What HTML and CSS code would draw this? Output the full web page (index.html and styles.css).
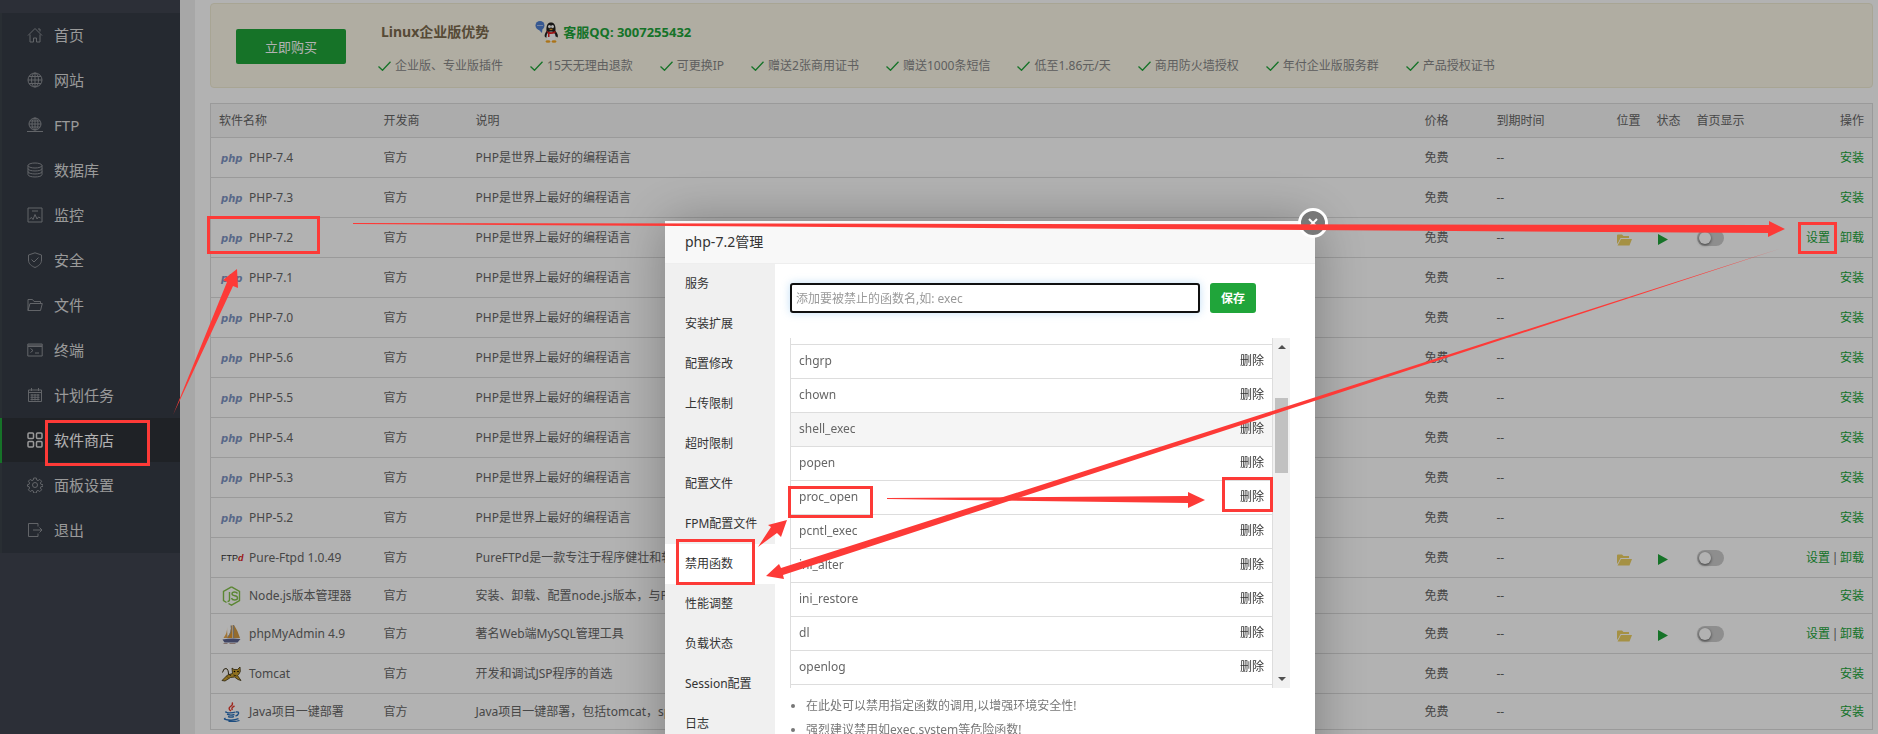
FILE: index.html
```html
<!DOCTYPE html>
<html lang="zh-CN">
<head>
    <meta charset="UTF-8">
    <meta name="viewport" content="width=device-width, initial-scale=1.0">
    <title>软件商店</title>
    <link rel="stylesheet" href="styles.css">
</head>
<body>
    <svg class="sprite" aria-hidden="true">
        <symbol id="i-home" viewBox="0 0 16 16"><path d="M1 8.5 8 1.5l7 7M3 7.5V15h3.5v-4h3v4H13V7.500M11 2h2v2.500"/></symbol>
        <symbol id="i-globe" viewBox="0 0 16 16"><circle cx="8" cy="8" r="7"/><ellipse cx="8" cy="8" rx="3.500" ry="7"/><path d="M8 1v14M1 8h14M2 4.500h12M2 11.500h12"/></symbol>
        <symbol id="i-ftp" viewBox="0 0 16 16"><circle cx="8" cy="7" r="6"/><ellipse cx="8" cy="7" rx="3" ry="6"/><path d="M8 1v12M2 7h12M3 4h10M3 10h10M0 14.500h16" /></symbol>
        <symbol id="i-db" viewBox="0 0 16 16"><ellipse cx="8" cy="3.500" rx="7" ry="2.500"/><path d="M1 3.500v9c0 3.300 14 3.300 14 0v-9M1 6.500c0 3.300 14 3.300 14 0M1 9.500c0 3.300 14 3.300 14 0"/></symbol>
        <symbol id="i-monitor" viewBox="0 0 16 16"><path d="M1 1h14v14H1zM5 4h6M2.500 12l2-1.500 1.500 2 2-5 2 4.500 1.500-2 2 1"/></symbol>
        <symbol id="i-shield" viewBox="0 0 16 16"><path d="M8 .8 14.500 3v5c0 4-3 6-6.500 7.500C4.500 14 1.500 12 1.500 8V3zM4.500 7.500 7 10l4.500-4.500"/></symbol>
        <symbol id="i-folder" viewBox="0 0 16 16"><path d="M1 13.500v-11h4.500l1.500 2h6.500v2M1 13.500l2-7h12.300l-1.800 7z"/></symbol>
        <symbol id="i-term" viewBox="0 0 16 16"><path d="M.8 2h14.400v12H.8zM1 4.500h14M1 3.200h14M3.500 6.500l2.500 2-2.500 2M8 11h4"/></symbol>
        <symbol id="i-cal" viewBox="0 0 16 16"><path d="M1.500 3h13v11.500h-13zM1.500 5.500h13M4.500 1v3M11.500 1v3M3.500 8h9M3.500 10.300h9M3.500 12.500h9M5 7v6.500M8 7v6.500M11 7v6.500"/></symbol>
        <symbol id="i-apps" viewBox="0 0 16 16"><rect x="1" y="1" width="5.500" height="5.500" rx="1"/><rect x="9.500" y="1" width="5.500" height="5.500" rx="1"/><rect x="1" y="9.500" width="5.500" height="5.500" rx="1"/><rect x="9.500" y="9.500" width="5.500" height="5.500" rx="1"/></symbol>
        <symbol id="i-gear" viewBox="0 0 16 16"><path d="M6.700 1h2.600l.4 2 1.300.600 1.800-1.200 1.800 1.800-1.200 1.800.5 1.300 2.100.4v1.600l-2.100.4-.5 1.300 1.200 1.800-1.800 1.800-1.800-1.200-1.300.600-.4 2H6.700l-.4-2L5 13.400l-1.800 1.200-1.800-1.800L2.600 11l-.5-1.300L.5 9.300V7.700l1.600-.4L2.600 6 1.400 4.200l1.800-1.800L5 3.600 6.300 3z"/><circle cx="8" cy="8" r="2.500"/></symbol>
        <symbol id="i-exit" viewBox="0 0 16 16"><path d="M11 4.500V1.500H1.500v13H11v-3M6 8h9M12.500 5.500 15 8l-2.500 2.500"/></symbol>
        <symbol id="i-check" viewBox="0 0 13 10"><path d="M.5 5.500 4.500 9.300 12.500.7" fill="none" stroke="#20a53a" stroke-width="1.300"/></symbol>
        <symbol id="i-open" viewBox="0 0 15 12"><path d="M0 10V1.500Q0 .5 1 .5h4l1.500 1.500H12v2H3.500L1.500 8z" fill="#edd062"/><path d="M4 5h11l-2.500 6.500H.5z" fill="#edd062"/></symbol>
        <symbol id="i-play" viewBox="0 0 10 11"><path d="M0 0v11l10-5.500z" fill="#20a53a"/></symbol>
    </svg>

    <div class="page">
        <nav class="sidebar">
            <ul class="menu">
                <li><a href="#"><svg><use href="#i-home"/></svg>首页</a></li>
                <li><a href="#"><svg><use href="#i-globe"/></svg>网站</a></li>
                <li><a href="#"><svg><use href="#i-ftp"/></svg>FTP</a></li>
                <li><a href="#"><svg><use href="#i-db"/></svg>数据库</a></li>
                <li><a href="#"><svg><use href="#i-monitor"/></svg>监控</a></li>
                <li><a href="#"><svg><use href="#i-shield"/></svg>安全</a></li>
                <li><a href="#"><svg><use href="#i-folder"/></svg>文件</a></li>
                <li><a href="#"><svg><use href="#i-term"/></svg>终端</a></li>
                <li><a href="#"><svg><use href="#i-cal"/></svg>计划任务</a></li>
                <li class="current"><a href="#"><svg><use href="#i-apps"/></svg>软件商店</a></li>
                <li><a href="#"><svg><use href="#i-gear"/></svg>面板设置</a></li>
                <li><a href="#"><svg><use href="#i-exit"/></svg>退出</a></li>
            </ul>
        </nav>

        <main class="content">
            <section class="banner">
                <button type="button" class="btn-buy">立即购买</button>
                <div class="banner-info">
                    <div class="banner-title">
                        <h3>Linux企业版优势</h3>
                        <a class="qq" href="#">
                            <svg width="24" height="22" viewBox="0 0 24 22">
                                <circle cx="5" cy="4.500" r="4.500" fill="#4f7fd0"/><path d="M3 8l4 4 .5-5z" fill="#4f7fd0"/>
                                <path d="M2.500 4.500h1M4.500 4.500h1M6.500 4.500h1" stroke="#fff"/>
                                <path d="M10 16c-1-1 0-4 1.500-6C11 4 13 1.500 16 1.500s5 2.500 4.500 8.500c2 2 3 5 2 6.500l-1.500-1-10 1z" fill="#222"/>
                                <ellipse cx="16" cy="15.500" rx="4.500" ry="5" fill="#fff"/>
                                <circle cx="14.500" cy="5.500" r="1.500" fill="#fff"/><circle cx="17.500" cy="5.500" r="1.500" fill="#fff"/>
                                <path d="M13.500 7.700h5l-2.500 1.600z" fill="#f5a623"/>
                                <path d="M11.500 10c3 1.500 6 1.500 9 0v2c-2 1-4 1.200-6 1v3h-1.500v-3.500z" fill="#e02020"/>
                                <ellipse cx="13" cy="20.500" rx="2.500" ry="1.200" fill="#f5a623"/><ellipse cx="19" cy="20.500" rx="2.500" ry="1.200" fill="#f5a623"/>
                            </svg>
                            客服QQ: 3007255432
                        </a>
                    </div>
                    <ul class="features">
                        <li><svg><use href="#i-check"/></svg>企业版、专业版插件</li>
                        <li><svg><use href="#i-check"/></svg>15天无理由退款</li>
                        <li><svg><use href="#i-check"/></svg>可更换IP</li>
                        <li><svg><use href="#i-check"/></svg>赠送2张商用证书</li>
                        <li><svg><use href="#i-check"/></svg>赠送1000条短信</li>
                        <li><svg><use href="#i-check"/></svg>低至1.86元/天</li>
                        <li><svg><use href="#i-check"/></svg>商用防火墙授权</li>
                        <li><svg><use href="#i-check"/></svg>年付企业版服务群</li>
                        <li><svg><use href="#i-check"/></svg>产品授权证书</li>
                    </ul>
                </div>
            </section>

            <table class="soft">
                <colgroup>
                    <col class="c-name"><col class="c-dev"><col><col class="c-price"><col class="c-end">
                    <col class="c-icon"><col class="c-icon"><col class="c-home"><col class="c-act">
                </colgroup>
                <thead>
                    <tr><th>软件名称</th><th>开发商</th><th>说明</th><th>价格</th><th>到期时间</th><th>位置</th><th>状态</th><th>首页显示</th><th class="act">操作</th></tr>
                </thead>
                <tbody>
                    <tr><td><span class="name"><i class="php">php</i>PHP-7.4</span></td><td>官方</td><td>PHP是世界上最好的编程语言</td><td>免费</td><td>--</td><td></td><td></td><td></td><td class="act"><a href="#">安装</a></td></tr>
                    <tr><td><span class="name"><i class="php">php</i>PHP-7.3</span></td><td>官方</td><td>PHP是世界上最好的编程语言</td><td>免费</td><td>--</td><td></td><td></td><td></td><td class="act"><a href="#">安装</a></td></tr>
                    <tr><td><span class="name"><i class="php">php</i>PHP-7.2</span></td><td>官方</td><td>PHP是世界上最好的编程语言</td><td>免费</td><td>--</td><td><svg class="open"><use href="#i-open"/></svg></td><td><svg class="play"><use href="#i-play"/></svg></td><td><input type="checkbox" class="switch" aria-label="首页显示 PHP-7.2"></td><td class="act"><a href="#">设置</a><span class="sep">|</span><a href="#">卸载</a></td></tr>
                    <tr><td><span class="name"><i class="php">php</i>PHP-7.1</span></td><td>官方</td><td>PHP是世界上最好的编程语言</td><td>免费</td><td>--</td><td></td><td></td><td></td><td class="act"><a href="#">安装</a></td></tr>
                    <tr><td><span class="name"><i class="php">php</i>PHP-7.0</span></td><td>官方</td><td>PHP是世界上最好的编程语言</td><td>免费</td><td>--</td><td></td><td></td><td></td><td class="act"><a href="#">安装</a></td></tr>
                    <tr><td><span class="name"><i class="php">php</i>PHP-5.6</span></td><td>官方</td><td>PHP是世界上最好的编程语言</td><td>免费</td><td>--</td><td></td><td></td><td></td><td class="act"><a href="#">安装</a></td></tr>
                    <tr><td><span class="name"><i class="php">php</i>PHP-5.5</span></td><td>官方</td><td>PHP是世界上最好的编程语言</td><td>免费</td><td>--</td><td></td><td></td><td></td><td class="act"><a href="#">安装</a></td></tr>
                    <tr><td><span class="name"><i class="php">php</i>PHP-5.4</span></td><td>官方</td><td>PHP是世界上最好的编程语言</td><td>免费</td><td>--</td><td></td><td></td><td></td><td class="act"><a href="#">安装</a></td></tr>
                    <tr><td><span class="name"><i class="php">php</i>PHP-5.3</span></td><td>官方</td><td>PHP是世界上最好的编程语言</td><td>免费</td><td>--</td><td></td><td></td><td></td><td class="act"><a href="#">安装</a></td></tr>
                    <tr><td><span class="name"><i class="php">php</i>PHP-5.2</span></td><td>官方</td><td>PHP是世界上最好的编程语言</td><td>免费</td><td>--</td><td></td><td></td><td></td><td class="act"><a href="#">安装</a></td></tr>
                    <tr><td><span class="name"><i class="ftp">FTP<b>d</b></i>Pure-Ftpd 1.0.49</span></td><td>官方</td><td>PureFTPd是一款专注于程序健壮和软件安全的免费FTP服务器软件</td><td>免费</td><td>--</td><td><svg class="open"><use href="#i-open"/></svg></td><td><svg class="play"><use href="#i-play"/></svg></td><td><input type="checkbox" class="switch" aria-label="首页显示 Pure-Ftpd"></td><td class="act"><a href="#">设置</a><span class="sep">|</span><a href="#">卸载</a></td></tr>
                    <tr class="low"><td><span class="name"><svg viewBox="0 0 20 20"><path d="M10 .8 18 5.400v9.200L10 19.200l-3-1.700M5 16.500l-3-1.900V5.400L10 .8M8 6v7.500q0 2-2 2M16 7.500q-1-1.500-3-1.500-2.500 0-2.500 1.800 0 1.700 2.700 1.900 2.800.3 2.800 2.300 0 2-3 2-2.500 0-3-2" fill="none" stroke="#83c04a" stroke-width="1.400"/></svg>Node.js版本管理器</span></td><td>官方</td><td>安装、卸载、配置node.js版本，与PM2管理器互斥</td><td>免费</td><td>--</td><td></td><td></td><td></td><td class="act"><a href="#">安装</a></td></tr>
                    <tr><td><span class="name"><svg viewBox="0 0 20 20"><path d="M5.500 3Q6 9 2 14h4z" fill="#e8a94e"/><path d="M11 1v13H5.500Q10 9 9.500 2z" fill="#e0962c"/><path d="M12.500 1Q16 6 18.500 14H12z" fill="#d39a44"/><path d="M9.500 1.500q1.500 6-3.500 12M12 1v13" fill="none" stroke="#999"/><path d="M1 15.500q9-1.500 18-.5l-3 3.500H3z" fill="#5c6490"/><path d="M2 19.500h4M8 19.500h6" stroke="#b9a09a"/></svg>phpMyAdmin 4.9</span></td><td>官方</td><td>著名Web端MySQL管理工具</td><td>免费</td><td>--</td><td><svg class="open"><use href="#i-open"/></svg></td><td><svg class="play"><use href="#i-play"/></svg></td><td><input type="checkbox" class="switch" aria-label="首页显示 phpMyAdmin"></td><td class="act"><a href="#">设置</a><span class="sep">|</span><a href="#">卸载</a></td></tr>
                    <tr><td><span class="name"><svg viewBox="0 0 20 20"><path d="M.5 16.500 6 11l5-1.500-.5-5.500 2 1.500h3.500L18.500 3l.3 4.500-1.600 3-1.200 1 3.500 5-3-1-3.500-2.500-4 .5L3.500 17z" fill="#cfa22c" stroke="#3a3014" stroke-width=".8"/><path d="M7 10.500Q7 5 4.500 4.500T1 8.500M8 10l1 2M5.500 12.500l1 1M12 11l3 1" fill="none" stroke="#3a3014"/><circle cx="13" cy="7.500" r=".8"/><circle cx="16.500" cy="7.500" r=".8"/></svg>Tomcat</span></td><td>官方</td><td>开发和调试JSP程序的首选</td><td>免费</td><td>--</td><td></td><td></td><td></td><td class="act"><a href="#">安装</a></td></tr>
                    <tr class="low"><td><span class="name"><svg viewBox="0 0 20 20"><path d="M10.500.5Q12 2.500 9 4.500T9.500 9M13 4q-4 2-2 4" fill="none" stroke="#e23a2c" stroke-width="1.400"/><path d="M5 9.500q-2 1 2 1.300t7-.8M5.500 12.200q3 1.500 7.500.3M6.500 14.700q3 1 6 0M14.500 10q3-.5 2.500 1.500T14 14M4 16q-3 1.500 3 2t10-1.300M7 19.300q7 .6 11-.8" fill="none" stroke="#2a6fb8" stroke-width="1.300"/></svg>Java项目一键部署</span></td><td>官方</td><td>Java项目一键部署，包括tomcat，springboot等</td><td>免费</td><td>--</td><td></td><td></td><td></td><td class="act"><a href="#">安装</a></td></tr>
                </tbody>
            </table>
        </main>
    </div>

    <div class="shade"></div>

    <div class="dialog" role="dialog" aria-label="php-7.2管理">
        <div class="dialog-title">php-7.2管理</div>
        <button type="button" class="dialog-close" aria-label="关闭">
            <svg width="10" height="10" viewBox="0 0 10 10"><path d="M1 1l8 8M9 1 1 9" stroke="#fff" stroke-width="2"/></svg>
        </button>
        <div class="dialog-body">
            <ul class="tabs">
                <li><a href="#">服务</a></li>
                <li><a href="#">安装扩展</a></li>
                <li><a href="#">配置修改</a></li>
                <li><a href="#">上传限制</a></li>
                <li><a href="#">超时限制</a></li>
                <li><a href="#">配置文件</a></li>
                <li><a href="#">FPM配置文件</a></li>
                <li class="on"><a href="#">禁用函数</a></li>
                <li><a href="#">性能调整</a></li>
                <li><a href="#">负载状态</a></li>
                <li><a href="#">Session配置</a></li>
                <li><a href="#">日志</a></li>
            </ul>
            <div class="pane">
                <form class="add">
                    <input type="text" aria-label="函数名" placeholder="添加要被禁止的函数名,如: exec">
                    <button type="button">保存</button>
                </form>
                <div class="list">
                    <table class="funcs">
                        <tr class="cut"><td></td><td></td></tr>
                        <tr><td>chgrp</td><td><a href="#">删除</a></td></tr>
                        <tr><td>chown</td><td><a href="#">删除</a></td></tr>
                        <tr class="hover"><td>shell_exec</td><td><a href="#">删除</a></td></tr>
                        <tr><td>popen</td><td><a href="#">删除</a></td></tr>
                        <tr><td>proc_open</td><td><a href="#">删除</a></td></tr>
                        <tr><td>pcntl_exec</td><td><a href="#">删除</a></td></tr>
                        <tr><td>ini_alter</td><td><a href="#">删除</a></td></tr>
                        <tr><td>ini_restore</td><td><a href="#">删除</a></td></tr>
                        <tr><td>dl</td><td><a href="#">删除</a></td></tr>
                        <tr><td>openlog</td><td><a href="#">删除</a></td></tr>
                        <tr class="cut"><td></td><td></td></tr>
                    </table>
                    <div class="scrollbar">
                        <span class="up"></span>
                        <span class="thumb"></span>
                        <span class="down"></span>
                    </div>
                </div>
                <ul class="tips">
                    <li>在此处可以禁用指定函数的调用,以增强环境安全性!</li>
                    <li>强烈建议禁用如exec,system等危险函数!</li>
                </ul>
            </div>
        </div>
    </div>

    <!-- 操作步骤标注 -->
    <svg class="marks" width="1878" height="734" viewBox="0 0 1878 734" aria-hidden="true">
        <g fill="none" stroke="#fd3a37" stroke-width="3">
            <rect x="46.500" y="421.500" width="102" height="43"/>
            <rect x="208.500" y="217.500" width="110" height="35"/>
            <rect x="1799.500" y="223.500" width="36" height="29"/>
            <rect x="677.500" y="540.500" width="76" height="43"/>
            <rect x="789.500" y="487.500" width="82" height="29"/>
            <rect x="1223.500" y="478.500" width="48" height="32"/>
        </g>
        <g fill="#fd3a37">
            <path d="M173 415 227 282 223 280 237 269 238 288 233 286z"/>
            <path d="M353 223 1769 225V221L1785 229 1768 237V233L353 224z"/>
            <path d="M1782 248 783 575 784 579 766 576 779 564 781 568z"/>
            <path d="M758 547 771 527 768 525 787 520 781 537 777 533z"/>
            <path d="M887 498 1188 496V492L1205 500 1188 508V503L887 499z"/>
        </g>
    </svg>
</body>
</html>
```

FILE: styles.css
```css
* {
    box-sizing: border-box;
}
body {
    margin: 0;
    height: 100vh;
    overflow: hidden;
    font-family: "Noto Sans", "Noto Sans CJK SC", sans-serif;
    font-size: 12px;
    line-height: 18px;
    color: #666;
    background: #fff;
}
ul {
    list-style: none;
    margin: 0;
    padding: 0;
}
a {
    color: #20a53a;
    text-decoration: none;
}
button,
input {
    font-family: inherit;
}
.sprite {
    position: absolute;
    width: 0;
    height: 0;
}
.page {
    display: flex;
    height: 100vh;
}

/* sidebar */
.sidebar {
    flex: 0 0 180px;
    padding-top: 13px;
    background: #3f4450;
}
.menu li {
    height: 45px;
    background: #363c46;
    border-left: 2px solid #3c4249;
}
.menu a {
    display: flex;
    align-items: center;
    gap: 11px;
    height: 44px;
    padding-left: 25px;
    font-size: 15px;
    color: #ddd;
}
.menu svg {
    width: 16px;
    height: 16px;
    fill: none;
    stroke: #8d9096;
}
.menu .current {
    border-left-color: #20a53a;
}
.menu .current a {
    background: #2d3137;
    color: #fff;
}
.menu .current svg {
    stroke: #ddd;
    stroke-width: 1.5;
}

/* content */
.content {
    flex: 1;
    min-width: 0;
    border-left: 15px solid #f0f0f0;
    padding: 3px 5px 0 15px;
}
.banner {
    display: flex;
    gap: 32px;
    height: 85px;
    margin-bottom: 15px;
    padding: 13px 25px;
    background: #fcf8e9;
    border: 1px solid #f1ecd5;
    border-radius: 4px;
    white-space: nowrap;
}
.btn-buy {
    width: 110px;
    height: 35px;
    margin-top: 12px;
    border: 0;
    border-radius: 2px;
    background: #20a53a;
    color: #fff;
    font-size: 13px;
}
.banner-title {
    display: flex;
    align-items: center;
    gap: 46px;
    height: 30px;
    padding-left: 3px;
}
.banner-title h3 {
    margin: 0;
    font-size: 14px;
    color: #7c6b4e;
}
.qq {
    display: flex;
    align-items: center;
    gap: 4px;
    font-size: 13px;
    font-weight: bold;
}
.features {
    display: flex;
    gap: 27px;
    margin-top: 10px;
    color: #888;
}
.features li {
    display: flex;
    align-items: center;
    gap: 4px;
}
.features svg {
    width: 13px;
    height: 10px;
}

/* software table */
.soft {
    width: 100%;
    table-layout: fixed;
    border-collapse: collapse;
    border: 1px solid #ddd;
}
.c-name { width: 165px; }
.c-dev { width: 92px; }
.c-price { width: 72px; }
.c-end { width: 120px; }
.c-icon { width: 40px; }
.c-home { width: 80px; }
.c-act { width: 104px; }
.soft th,
.soft td {
    height: 40px;
    padding: 0 8px;
    border-bottom: 1px solid #ddd;
    text-align: left;
    font-weight: normal;
    white-space: nowrap;
}
.soft th {
    height: 34px;
    background: #f6f6f6;
}
.soft .low td {
    height: 36px;
}
.soft .act {
    text-align: right;
}
.sep {
    display: inline-block;
    width: 10px;
    text-align: center;
}
.name {
    display: flex;
    align-items: center;
    gap: 7px;
    padding-left: 2px;
}
.name svg,
.name i {
    width: 21px;
    height: 20px;
    line-height: 20px;
}
.name .php {
    font-family: "DejaVu Sans", sans-serif;
    font-size: 10px;
    font-weight: bold;
    line-height: 22px;
    color: #7f95c4;
}
.ftp {
    font-family: "Liberation Sans Narrow", "Liberation Sans", sans-serif;
    font-size: 9px;
    font-style: normal;
    color: #333;
}
.ftp b {
    font-style: italic;
    color: #d22;
}
.open,
.play {
    display: block;
    width: 15px;
    height: 12px;
    margin-top: 4px;
}
.play {
    width: 10px;
    height: 11px;
    margin-left: 1px;
}
.switch {
    display: block;
    appearance: none;
    width: 27px;
    height: 16px;
    margin: 0;
    padding: 2px;
    border-radius: 8px;
    background: #ccc;
}
.switch::before {
    content: "";
    display: block;
    width: 12px;
    height: 12px;
    border-radius: 50%;
    background: #fff;
    box-shadow: 0 1px 3px #555;
}

.shade {
    position: fixed;
    inset: 0;
    background: rgba(0, 0, 0, 0.3);
}

/* dialog */
.dialog {
    position: fixed;
    top: 221px;
    left: calc(50% - 274px);
    width: 650px;
    height: 640px;
    display: flex;
    flex-direction: column;
    background: #fff;
    color: #333;
    box-shadow: 1px 1px 50px rgba(0, 0, 0, 0.3);
}
.dialog-title {
    height: 43px;
    padding-left: 20px;
    line-height: 42px;
    font-size: 14px;
    background: #f8f8f8;
    border-bottom: 1px solid #eee;
}
.dialog-close {
    position: absolute;
    top: -13px;
    right: -13px;
    display: flex;
    align-items: center;
    justify-content: center;
    width: 30px;
    height: 30px;
    padding: 0;
    border: 3px solid #fff;
    border-radius: 50%;
    background: #787878;
}
.dialog-body {
    flex: 1;
    display: flex;
}
.tabs {
    flex: 0 0 110px;
    background: #f0f0f0;
}
.tabs a {
    display: block;
    height: 40px;
    padding-left: 20px;
    line-height: 40px;
    color: #333;
}
.tabs .on {
    background: #fff;
}
.pane {
    flex: 1;
    padding: 19px 25px 0 15px;
}
.add {
    display: flex;
    gap: 10px;
    margin-bottom: 25px;
}
.add input {
    width: 410px;
    height: 30px;
    padding: 0 4px;
    border: 2px solid #101010;
    border-radius: 3px;
    font-size: 12px;
    box-shadow: 0 0 8px rgba(102, 175, 233, 0.4);
}
.add input::placeholder {
    color: #999;
}
.add button {
    width: 46px;
    height: 30px;
    padding: 0;
    border: 0;
    border-radius: 3px;
    background: #20a53a;
    color: #fff;
    font-size: 12px;
    font-weight: bold;
}
.list {
    display: flex;
    align-items: flex-start;
    height: 350px;
    overflow: hidden;
}
.funcs {
    flex: 1;
    border-collapse: collapse;
    border: 1px solid #ddd;
    border-top: 0;
    color: #666;
}
.funcs td {
    height: 34px;
    padding: 0 8px;
    border-bottom: 1px solid #ddd;
}
.funcs td:last-child {
    text-align: right;
}
.funcs a {
    color: #333;
}
.funcs .cut td {
    height: 6px;
}
.funcs .hover {
    background: #f5f5f5;
}
.scrollbar {
    display: flex;
    flex-direction: column;
    align-items: center;
    width: 17px;
    height: 350px;
    padding: 7px 0;
    background: #f1f1f1;
}
.scrollbar .up,
.scrollbar .down {
    border: 4px solid transparent;
    border-top: 0;
    border-bottom-color: #505050;
}
.scrollbar .down {
    margin-top: auto;
    border-top: 4px solid #505050;
    border-bottom: 0;
}
.scrollbar .thumb {
    width: 13px;
    height: 75px;
    margin-top: 49px;
    background: #c1c1c1;
}
.tips {
    list-style: disc;
    margin-top: 6px;
    padding-left: 16px;
    line-height: 24px;
    color: #777;
}

.marks {
    position: absolute;
    top: 0;
    left: 0;
    pointer-events: none;
}
```
